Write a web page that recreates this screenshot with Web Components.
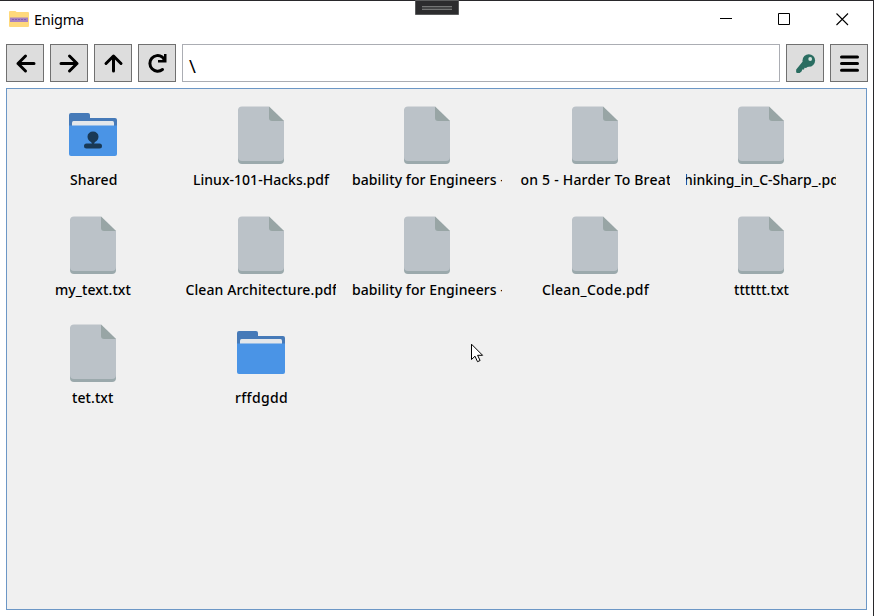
<!DOCTYPE html>
<html lang="en"><head><meta charset="utf-8"><title>Enigma</title>
<style>html,body{margin:0;height:100%;overflow:hidden;background:#fff}</style></head>
<body><enigma-window></enigma-window>
<script>
const define = (name, html, ready) => customElements.define(name, class extends HTMLElement {
  connectedCallback() {
    if (this.shadowRoot) return;
    this.attachShadow({mode: 'open'}).innerHTML = html;
    if (ready) ready.call(this, this.shadowRoot);
  }
});

/* Text whose tracking is adjusted so that it spans the given width. */
define('fit-text', `<style>:host{display:block;white-space:pre}span{display:inline-block}</style><span><slot></slot></span>`, function (root) {
  const s = root.querySelector('span'), w = +this.getAttribute('width');
  s.style.letterSpacing = ((w - s.getBoundingClientRect().width) / this.textContent.length) + 'px';
});

define('tool-button', `<style>:host{display:flex;box-sizing:border-box;width:38px;height:38px;flex:none;border:1px solid #707070;background:#ddd}
::slotted(svg){display:block;width:36px;height:36px}</style><slot></slot>`);

define('title-bar', `<style>
:host{display:flex;height:38px;align-items:center;padding:0 2px 2px 9px;box-sizing:border-box;font:14.5px "Noto Sans","Open Sans",sans-serif;color:#000}
svg{display:block;flex:none}fit-text{margin-left:5px;flex:1;line-height:20px}.c{width:58px;height:36px}
</style>
<svg width="20" height="18" viewBox="0 0 20 18"><path d="M0 2q0-1 1-1h5q1 0 1.500 1h11.500q1 0 1 1v13q0 1-1 1H1q-1 0-1-1z" fill="#ffd97c"/><path d="M1 7.500h18v4.500H1z" fill="#a983c0"/><path d="M3 9.500h14" stroke="#8460ae" stroke-dasharray="2 1"/></svg>
<fit-text width="50">Enigma</fit-text>
<svg class="c" viewBox="0 0 58 36"><path d="M23 17.500h12" stroke="#000"/></svg>
<svg class="c" viewBox="0 0 58 36"><path d="M23.500 12.500h11v11h-11z" fill="none" stroke="#000"/></svg>
<svg class="c" viewBox="0 0 58 36"><path d="M23.500 12.500l11.500 11.500M35 12.500L23.500 24" fill="none" stroke="#000" stroke-width="1.100"/></svg>`);

define('path-field', `<style>:host{display:block;flex:1;height:38px;box-sizing:border-box;border:1px solid #abadb3;padding:8px 6px;font:18.500px/25px "Noto Sans",sans-serif;background:#fff}</style><slot></slot>`);

const page = `<svg width="46" height="58" viewBox="0 0 46 58"><path d="M4 2h27l15 15v37q0 4-4 4H4q-4 0-4-4V6q0-4 4-4z" fill="#9ba9ac"/><path d="M4 .5h27L46 15v36q0 4-4 4H4q-4 0-4-4v-46.500q0-4 4-4z" fill="#bbc2c8"/><path d="M31 .5L46 15H34q-3 0-3-3z" fill="#98a5a5"/></svg>`;
const folder = who => `<svg width="48" height="58" viewBox="0 0 48 58"><path d="M2 7h17q2 0 2 2v3h25q2 0 2 2v12H0V9q0-2 2-2z" fill="#467ab8"/><path d="M3 17q0-2 1.500-2h39q1.500 0 1.500 2v7H3z" fill="#e3e7eb"/><path d="M0 19.500h48V48q0 2-2 2H2q-2 0-2-2z" fill="#4a94e6"/>${who ? '<path d="M18.500 30.500a5.500 5 0 0 1 11 0q0 3.500-3.500 5.500l-1 1.500h5.500q2.500 0 2.500 2.500 0 2.500-2.500 2.500h-13q-2.500 0-2.500-2.500 0-2.500 2.500-2.500H23L22 36q-3.500-2-3.500-5.500z" fill="#193956"/>' : ''}</svg>`;

define('file-item', `<style>
:host{display:block;width:150px;height:84px;font:500 14px/20px "Noto Sans","Open Sans",sans-serif;color:#000}
.icon{display:flex;justify-content:center;height:58px}.icon svg{display:block}
.label{overflow:hidden;height:22px;margin-top:6px}</style><div class="icon"></div><div class="label"><fit-text></fit-text></div>`, function (root) {
  const kind = this.getAttribute('kind');
  root.querySelector('.icon').innerHTML = kind ? folder(kind === 'shared') : page;
  const t = document.createElement('fit-text');
  t.textContent = this.getAttribute('name');
  t.setAttribute('width', this.getAttribute('span'));
  t.style.marginLeft = this.getAttribute('start') + 'px';
  root.querySelector('.label').replaceChildren(t);
});

define('file-grid', `<style>:host{display:grid;box-sizing:border-box;flex:1;border:1px solid #6c97c6;background:#f0f0f0;padding:17px 0 0 11px;grid-template-columns:168px 166px 168px 166px 150px;grid-template-rows:110px 108px 84px;align-content:start}</style>
<file-item kind="shared" name="Shared" start="52" span="47.5"></file-item>
<file-item name="Linux-101-Hacks.pdf" start="7" span="136"></file-item>
<file-item name="bability for Engineers -" start="0" span="153"></file-item>
<file-item name="on 5 - Harder To Breat" start="0.5" span="151"></file-item>
<file-item name="hinking_in_C-Sharp_.pd" start="-2" span="155"></file-item>
<file-item name="my_text.txt" start="37" span="76"></file-item>
<file-item name="Clean Architecture.pdf" start="-0.5" span="151.5"></file-item>
<file-item name="bability for Engineers -" start="0" span="153"></file-item>
<file-item name="Clean_Code.pdf" start="22" span="107"></file-item>
<file-item name="tttttt.txt" start="48" span="55"></file-item>
<file-item name="tet.txt" start="54" span="41.5"></file-item>
<file-item kind="plain" name="rffdgdd" start="49" span="53"></file-item>`);

define('enigma-window', `<style>
:host{display:flex;flex-direction:column;box-sizing:border-box;width:874px;height:616px;border-top:1px solid #29282b;border-right:1px solid #29282b;padding-bottom:6px;background:#fff;position:relative}
.tools{display:flex;gap:6px;padding:5px 5px 6px 6px}
file-grid{margin:0 6px}
.handle,.cursor{position:absolute;display:block}.handle{left:415px;top:-1px}.cursor{left:471px;top:342px}
.k{fill:none;stroke:#000;stroke-width:3;stroke-linecap:round;stroke-linejoin:round}
</style>
<title-bar></title-bar>
<div class="tools">
<tool-button><svg viewBox="0 0 36 36"><path class="k" d="M27 18.500H11M18.500 11l-7.500 7.500L18.500 26"/></svg></tool-button>
<tool-button><svg viewBox="0 0 36 36"><path class="k" d="M10 18.500h16M18.500 11l7.500 7.500L18.500 26"/></svg></tool-button>
<tool-button><svg viewBox="0 0 36 36"><path class="k" d="M18.500 26V11M11 18.500l7.500-7.500L26 18.500"/></svg></tool-button>
<tool-button><svg viewBox="0 0 36 36"><path class="k" d="M23.500 24.500a7.800 7.800 0 1 1-.3-12.500l2 2"/><path d="M27.500 9v8.500H19v-2.500h4l2-2V9z"/></svg></tool-button>
<path-field>\\</path-field>
<tool-button><svg viewBox="0 0 36 36"><g fill="#2a6d61"><circle cx="21.800" cy="15.500" r="6.300"/><path d="M16.500 15.500l5.500 5.500-3 2-1.500-.3-.5 1.800-1.800 0-.5 1.800-2 1.700H9.800q-1-1-.6-3.500z"/></g><circle cx="23.200" cy="14" r="1.900" fill="#d2e2dc"/></svg></tool-button>
<tool-button><svg viewBox="0 0 36 36"><path d="M10.500 12h16M10.500 18.500h16M10.500 25.200h16" stroke="#000" stroke-width="3" stroke-linecap="round"/></svg></tool-button>
</div>
<file-grid></file-grid>
<svg class="handle" width="44" height="15"><path d="M.5.5h43v14H.5z" fill="#2c2c2e" stroke="#5a5b5c"/><path d="M7 6.500h30M7 9.500h30" stroke="#747575"/><path d="M7 8h30" stroke="#444546" stroke-width="2"/></svg>
<svg class="cursor" width="14" height="21" viewBox="0 0 14 21"><path d="M.5 1.200v15.300l3.500-3.300 2.500 5.500 2.600-1.200-2.500-5.200h5z" fill="#fff" stroke="#000"/></svg>`);
</script></body></html>
